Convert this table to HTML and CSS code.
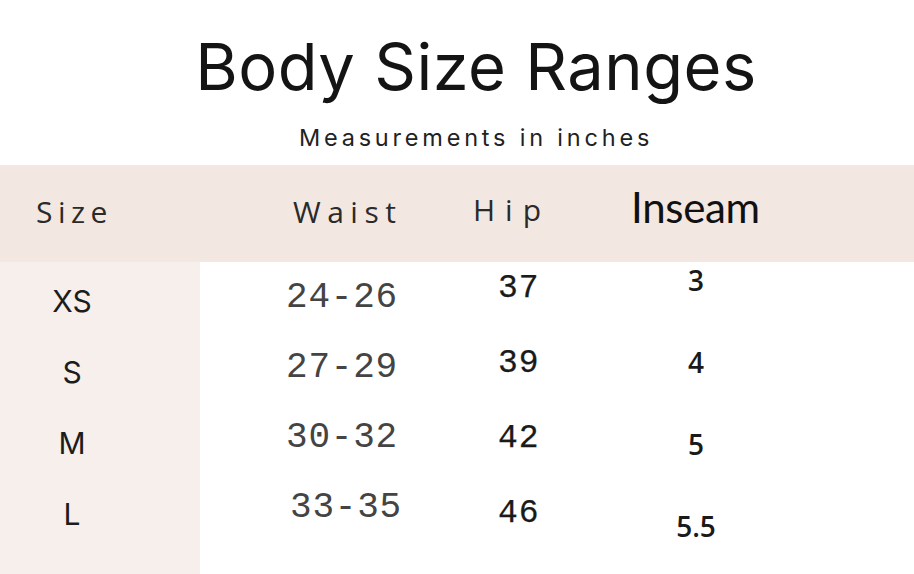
FILE: index.html
```html
<!DOCTYPE html>
<html lang="en">
<head>
<meta charset="utf-8">
<title>Body Size Ranges</title>
<link rel="stylesheet" href="styles.css">
</head>
<body>
<div class="page">
  <header class="head">
    <h1 class="title">Body Size Ranges</h1>
    <p class="subtitle">Measurements in inches</p>
  </header>
  <div class="band">
    <div class="hcell h-size">Size</div>
    <div class="hcell h-waist">Waist</div>
    <div class="hcell h-hip">Hip</div>
    <div class="hcell h-inseam">Inseam</div>
  </div>
  <div class="rows">
    <ul class="col col-size">
      <li>XS</li>
      <li>S</li>
      <li>M</li>
      <li>L</li>
      <li>XL</li>
    </ul>
    <ul class="col col-waist">
      <li>24-26</li>
      <li>27-29</li>
      <li>30-32</li>
      <li class="shift">33-35</li>
    </ul>
    <ul class="col col-hip">
      <li>37</li>
      <li>39</li>
      <li>42</li>
      <li>46</li>
    </ul>
    <ul class="col col-inseam">
      <li>3</li>
      <li>4</li>
      <li>5</li>
      <li>5.5</li>
    </ul>
  </div>
</div>
</body>
</html>
```
FILE: styles.css
```css
html, body {
  margin: 0;
  padding: 0;
  background: #ffffff;
}

.page {
  width: 914px;
  height: 574px;
  overflow: hidden;
  background: #ffffff;
  color: #1a1a1a;
}

.head {
  padding: 34px 0 0 38px;
  text-align: center;
  height: 165px;
  box-sizing: border-box;
}

.title {
  margin: 0;
  font-family: "Inter", "Noto Sans", sans-serif;
  font-weight: 400;
  font-size: 65px;
  line-height: 1;
  color: #141414;
  letter-spacing: 0.5px;
}

.subtitle {
  margin: 27px 0 0;
  font-family: "Inter", "Noto Sans", sans-serif;
  font-size: 23.5px;
  line-height: 1;
  letter-spacing: 3.8px;
  color: #222222;
}

.band {
  height: 97px;
  background: #f3e7e1;
  display: grid;
  grid-template-columns: 200px 260px 160px 1fr;
  align-items: baseline;
  padding-top: 22px;
  box-sizing: border-box;
}

.hcell {
  font-family: "Open Sans", sans-serif;
  font-size: 30px;
  line-height: 40px;
  color: #2a2a2a;
}

.h-size { padding-left: 36px; letter-spacing: 5.5px; }
.h-waist { padding-left: 93px; letter-spacing: 6.5px; }
.h-hip { padding-left: 13px; letter-spacing: 10px; position: relative; top: -2px; }
.h-inseam {
  padding-left: 11px;
  font-family: "Lato", "Open Sans", sans-serif;
  font-size: 42px;
  color: #111111;
  letter-spacing: -0.3px;
}

.rows {
  height: 312px;
  display: grid;
  grid-template-columns: 200px 260px 160px 1fr;
  overflow: hidden;
}

.col {
  list-style: none;
  margin: 0;
  padding: 0;
  display: flex;
  flex-direction: column;
}

.col-size {
  background: #f6efeb;
  padding-top: 19px;
  gap: 31px;
  font-family: "Inter", "Noto Sans", sans-serif;
  font-size: 30px;
  line-height: 40px;
  color: #1c1c1c;
}

.col-size li {
  width: 144px;
  text-align: center;
}

.col-waist {
  padding: 16px 0 0 86px;
  gap: 30px;
  font-family: "Liberation Mono", monospace;
  font-size: 36px;
  line-height: 40px;
  letter-spacing: 0.8px;
  color: #444444;
}

.col-waist .shift { padding-left: 4px; }

.col-hip {
  padding: 7px 0 0 38px;
  gap: 35px;
  font-family: "Liberation Mono", monospace;
  font-size: 33px;
  line-height: 40px;
  letter-spacing: 1px;
  color: #1a1a1a;
  -webkit-text-stroke: 0.25px #1a1a1a;
}

.col-inseam {
  padding-top: 0;
  gap: 46px;
  font-family: "Open Sans", sans-serif;
  font-weight: 600;
  font-size: 28px;
  line-height: 36px;
  color: #1a1a1a;
}

.col-inseam li {
  width: 152px;
  text-align: center;
}
```
